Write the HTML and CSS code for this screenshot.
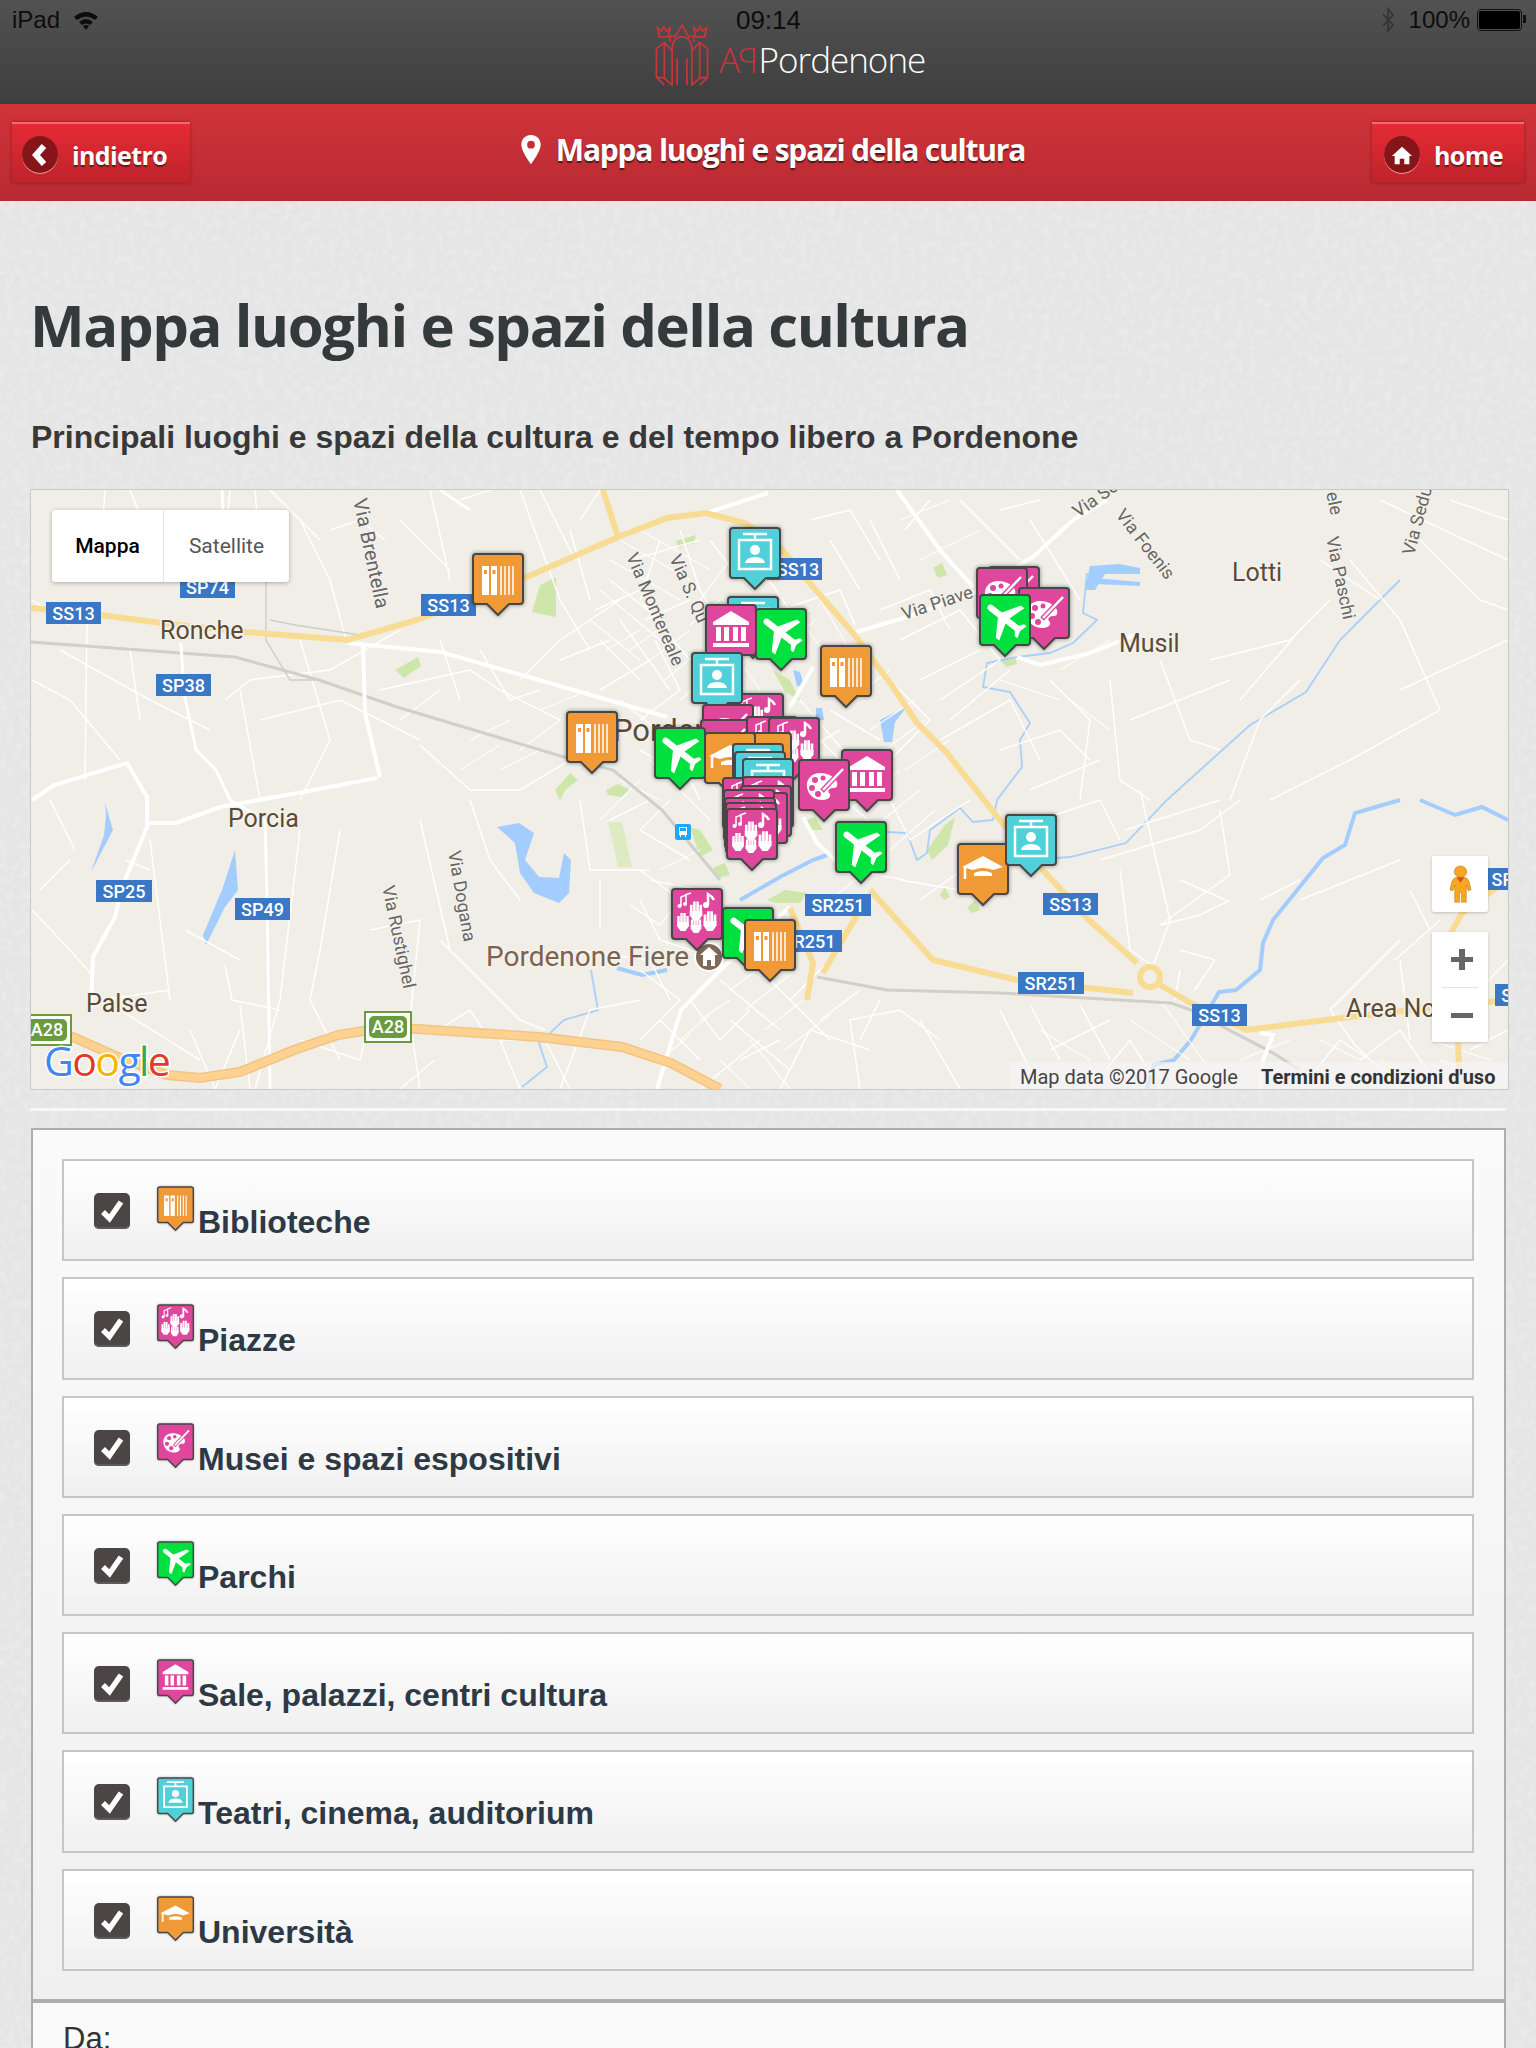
FILE: index.html
```html
<!DOCTYPE html>
<html lang="it">
<head>
    <meta charset="UTF-8">
    <meta name="viewport" content="width=device-width, initial-scale=1.0">
    <title>Mappa luoghi e spazi della cultura</title>
    <link rel="stylesheet" href="styles.css">
</head>
<body>

<!-- marker del pin, riusati in mappa e in legenda -->
<svg class="sprites" width="0" height="0" aria-hidden="true">
    <defs>
        <path id="pin-shape" d="M4 1H48Q51 1 51 4V48Q51 51 48 51H37L26 62L15 51H4Q1 51 1 48V4Q1 1 4 1Z"/>
        <g id="hand">
            <path class="ico-line" d="M-4.500 -5V2M-1.500 -8V2M1.500 -8V2M4.500 -5V2"/>
            <path class="ico-fill" d="M-6 1H6V5L2.500 10H-2.500L-6 5Z"/>
        </g>
        <symbol id="m-lib" viewBox="0 0 52 64">
            <use href="#pin-shape" class="pin-orange"/>
            <path class="ico-fill" d="M10 13H17V42H10ZM19 13H25V42H19Z"/>
            <path class="ico-thin" d="M29 13V42M33 13V42M37 13V42M41 13V42"/>
            <path class="ico-mark-orange" d="M12 17H15V21H12ZM20.500 17H23.500V21H20.500Z"/>
        </symbol>
        <symbol id="m-music" viewBox="0 0 52 64">
            <use href="#pin-shape" class="pin-pink"/>
            <path class="ico-thin" d="M10 18V9L15 7V16M14 7L20 5"/>
            <path class="ico-line" d="M37 17V6Q41 8 43 12"/>
            <circle class="ico-fill" cx="8.500" cy="18" r="2"/>
            <circle class="ico-fill" cx="14" cy="16" r="2"/>
            <circle class="ico-fill" cx="35" cy="17" r="3"/>
            <use href="#hand" transform="translate(25 22) scale(1.050)"/>
            <use href="#hand" transform="translate(12 33)"/>
            <use href="#hand" transform="translate(39 32) scale(1.100)"/>
            <use href="#hand" transform="translate(25 36) scale(.9)"/>
        </symbol>
        <symbol id="m-palette" viewBox="0 0 52 64">
            <use href="#pin-shape" class="pin-pink"/>
            <path class="ico-fill" d="M22 14C13 14 8 21 9 28C10 36 17 42 26 41C31 40 34 37 31 34C29 31 32 29 36 29C40 29 40 24 38 21C35 17 29 14 22 14Z"/>
            <circle class="ico-mark-pink" cx="17" cy="21" r="3"/>
            <circle class="ico-mark-pink" cx="14" cy="29" r="3"/>
            <circle class="ico-mark-pink" cx="20" cy="35" r="3"/>
            <circle class="ico-mark-pink" cx="25" cy="19" r="2.500"/>
            <path class="ico-edge-pink" d="M24 32L46 9"/>
            <path class="ico-line" d="M25 31L45 10"/>
        </symbol>
        <symbol id="m-park" viewBox="0 0 52 64">
            <use href="#pin-shape" class="pin-green"/>
            <path class="ico-fill" transform="translate(26 25) rotate(-52) scale(2.150) translate(-11.500 -12)" d="M21 16v-2l-8-5V3.500c0-.83-.67-1.500-1.500-1.500S10 2.670 10 3.500V9l-8 5v2l8-2.500V19l-2 1.500V22l3.500-1 3.500 1v-1.500L13 19v-5.500l8 2.500z"/>
        </symbol>
        <symbol id="m-hall" viewBox="0 0 52 64">
            <use href="#pin-shape" class="pin-pink"/>
            <path class="ico-fill" d="M26 7L44 18V21H8V18ZM8 39H44V43H8ZM11 23H16V37H11ZM19 23H24V37H19ZM28 23H33V37H28ZM36 23H41V37H36Z"/>
        </symbol>
        <symbol id="m-theatre" viewBox="0 0 52 64">
            <use href="#pin-shape" class="pin-teal"/>
            <path class="ico-line" d="M14 7H38M26 7V12M10 13H42V42H10Z"/>
            <circle class="ico-fill" cx="26" cy="23" r="5"/>
            <path class="ico-fill" d="M16 36Q17 30 26 30Q35 30 36 36Z"/>
        </symbol>
        <symbol id="m-uni" viewBox="0 0 52 64">
            <use href="#pin-shape" class="pin-orange"/>
            <path class="ico-fill" d="M26 13L46 24L36 27Q26 23 16 27L5 24ZM17 30Q26 26 35 30V33H17Z"/>
            <path class="ico-line" d="M8 24V36"/>
        </symbol>
        <filter id="paper-noise" x="0" y="0" width="100%" height="100%">
            <feTurbulence type="fractalNoise" baseFrequency="0.14" numOctaves="4" seed="4"/>
            <feColorMatrix type="matrix" values="0 0 0 0 1  0 0 0 0 1  0 0 0 0 1  0.5 0 0 0 -0.19"/>
        </filter>
    </defs>
</svg>

<svg class="paper" aria-hidden="true"><rect class="paper-rect" width="1536" height="2048"/></svg>

<header class="topbar">
    <div class="status">
        <div class="status-left">
            <span>iPad</span>
            <svg class="wifi" viewBox="0 0 26 20">
                <path d="M1 7Q13 -3 25 7L22 10Q13 3 4 10ZM6 12Q13 6 20 12L17 15Q13 12 9 15ZM10 16Q13 14 16 16L13 20Z"/>
            </svg>
        </div>
        <div class="status-time">09:14</div>
        <div class="status-right">
            <svg class="bluetooth" viewBox="0 0 14 26">
                <path d="M2 7L12 18L7 24V2L12 8L2 19"/>
            </svg>
            <span>100%</span>
            <div class="battery"><div class="battery-fill"></div></div>
        </div>
    </div>
    <div class="logo">
        <svg class="logo-icon" viewBox="0 0 56 64">
            <path d="M2 26L10 20V56L18 63V28Q18 14 28 14Q38 14 38 28V63L46 56V20L54 26V55L46 63M2 26V55L10 63M10 56L2 55M18 28L10 20M38 28L46 20M54 55L46 56"/>
            <path d="M16 19V13L21 14L24 9L28 2L32 9L35 14L40 13V19M23 36V63M33 36V63"/>
            <path d="M5 14L3 5L7 8L9.500 4L12 8L16 5L14 14Z"/>
            <path d="M42 14L40 5L44 8L46.500 4L49 8L53 5L51 14Z"/>
        </svg>
        <div class="logo-text">
            <span class="logo-a">A</span><span class="logo-p">P</span><span class="logo-name">Pordenone</span>
        </div>
    </div>
</header>

<nav class="navbar">
    <a class="nav-btn">
        <span class="nav-circle">
            <svg viewBox="0 0 20 24"><path class="nav-chevron" d="M14 3L6 12L14 21"/></svg>
        </span>
        indietro
    </a>
    <div class="nav-title">
        <svg class="nav-pin" viewBox="0 0 20 30">
            <path d="M10 0C4 0 0 4.500 0 10C0 17 10 30 10 30C10 30 20 17 20 10C20 4.500 16 0 10 0ZM10 14A4 4 0 1 1 10 6A4 4 0 0 1 10 14Z"/>
        </svg>
        Mappa luoghi e spazi della cultura
    </div>
    <a class="nav-btn nav-btn-home">
        <span class="nav-circle">
            <svg viewBox="0 0 24 24"><path class="nav-house" d="M12 3L23 13H20V22H14.500V16H9.500V22H4V13H1Z"/></svg>
        </span>
        home
    </a>
</nav>

<main class="content">
    <h1>Mappa luoghi e spazi della cultura</h1>
    <h2>Principali luoghi e spazi della cultura e del tempo libero a Pordenone</h2>

    <div class="map">
        <svg class="map-canvas" viewBox="31 490 1477 599">
            <rect class="m-land" x="31" y="490" width="1477" height="599"/>

            <!-- parchi e acqua -->
            <path class="m-park" d="M676 541L696 535L694 543L678 548ZM540 585L556 577L556 617L532 612ZM395 670L418 657L421 666L404 678ZM555 790L570 773L578 780L565 790L560 800ZM606 790L618 784L630 790L622 797L608 795ZM773 670L790 680L800 700L785 692ZM933 568L942 563L947 575L938 578ZM1000 660L1015 657L1017 664L1006 667ZM927 850L945 825L955 817L948 845L932 860ZM940 895L945 887L950 897L944 900ZM967 908L975 900L980 910L972 913ZM767 900L785 890L807 893L800 903L775 903ZM690 827L700 830L713 850L700 857ZM713 868L725 863L730 875L718 878ZM807 820L815 817L823 830L812 830Z"/>
            <path class="m-park-pale" d="M608 822H622L632 867H618Z"/>
            <path class="m-water" d="M497 827L519 823L534 833L525 860L539 877L559 878L564 853L571 860L569 893L559 903L534 893L520 873L515 843ZM105 803L113 830L91 872L104 835L106 815ZM235 850L238 890L225 907L206 945L203 935L222 890ZM884 742L880 720L892 714L906 708L895 722L892 742ZM793 670L800 672L804 686L797 686ZM816 708L822 708L824 720L816 720ZM1090 566L1120 564L1140 568V574L1105 574L1095 590L1085 590ZM1095 578L1140 582V586L1095 584ZM226 510L238 490Z"/>
            <path class="m-river" d="M1400 800L1355 813L1345 845L1323 858L1273 920L1263 943L1260 970L1236 990L1219 992L1191 1040L1174 1060L1154 1065L1147 1089"/>
            <path class="m-river" d="M1420 800L1455 815L1482 807L1508 820"/>
            <path class="m-river" d="M740 900L780 877L813 860L827 855M617 968L642 975L667 970"/>
            <path class="m-river-thin" d="M1087 573L1083 613L1097 620L1073 643L1050 653L1017 657L987 663L983 687L1010 692L1030 723L1020 740L1022 767L997 800L993 820L973 822L960 808L930 830L927 853L917 860L907 833L887 832M1055 858L1070 857L1126 843L1167 800L1250 725L1306 692L1340 640L1400 580M591 970L598 1010L564 1020L539 1043L547 1067L522 1087"/>

            <!-- strade minori -->
            <path class="m-minor" d="M105 490L100 560M130 490L150 540L210 575M230 490L225 550M255 490L262 580M32 600L70 625M87 624L85 780M32 680L70 700L120 760M60 650L150 700L210 730M130 650L140 720M225 700L250 680L330 670L400 630M240 690L260 800M260 720L340 700L420 740M300 640L330 740L300 800M380 690L470 670L500 690L560 720M400 720L440 690M420 745L470 790L520 790L570 760M440 640L460 700M480 650L510 700L540 690M520 680L560 640L620 600M560 660L610 640M600 640L640 680M600 690L650 660M620 620L670 690M640 600L690 660M570 530L590 600M520 490L560 600L590 650M430 490L450 580M400 520L450 570M330 530L360 520L385 540M300 520L330 580L346 640M270 490L290 510L320 540M460 500L520 480M540 490L575 560M600 490L580 520M630 560L700 540M660 540L640 600M680 530L700 590L730 640M595 610L640 590M610 580L660 620M645 620L690 600M655 640L680 690L640 720"/>
            <path class="m-minor" d="M32 910L70 950L92 975M120 1010L200 1060M100 1000L170 990M150 840L170 1000M185 930L240 960M300 830L280 1000L255 1089M340 830L320 950L310 1000L340 1060M370 930L420 920L410 1020L420 1089M420 820L450 950L520 1020L545 1030M440 940L500 1000M470 800L490 860L520 900M580 800L590 870L650 870M600 880L600 930M240 1005L250 1089M225 965L232 1000L280 1010M215 1089L240 1030M50 800L75 850M40 890L70 860M125 860L150 870M300 1040L360 1060L370 1020M190 1030L215 1089M430 1035L470 1010L490 1040M435 1060L400 1089M520 1089L500 1040L545 1040M545 1040L570 1089M560 1089L590 1010L640 1000M575 950L650 960L670 1000M630 905L660 925L680 900M640 870L680 900M640 970L680 1000L640 1040M660 1020L700 1060M690 1000L720 1040L750 1010M700 1089L760 1040M730 1020L790 1070M740 1060L780 1040M780 1089L810 1030L870 1050M860 1089L850 1020L900 1010L940 1040M920 1020L960 1089M1000 1010L1040 1089M1080 1005L1110 1060M1050 1050L1110 1020"/>
            <path class="m-minor" d="M780 610L840 590L855 625M810 520L850 510L880 560M830 540L860 590M870 520L900 580M880 610L930 590L950 630M930 500L905 530M960 500L1020 560M1000 510L1040 500M1030 520L1080 600M900 640L960 610L1000 660L940 700M920 680L980 650M950 720L1010 670M870 660L930 720L890 760M940 740L1010 700L1040 760M1000 750L1060 730L1090 760M1050 680L1090 720L1080 800M1110 680L1120 780L1150 800M1160 660L1190 740L1220 750M1130 720L1230 680M1210 660L1290 640L1330 600M1240 700L1300 630M1300 680L1260 720L1230 800M1350 560L1400 620L1440 710L1350 760L1270 800M1420 540L1480 600L1508 610M1320 560L1380 600M1400 690L1508 640M1380 500L1508 560M1450 500L1508 520M880 780L910 840L970 800M920 900L990 850M990 870L1010 830L1100 800L1120 840M1030 790L1100 760M1100 860L1200 830L1240 800M1120 870L1130 950L1160 970M1125 830L1220 800M1140 790L1170 920L1150 975M1180 880L1226 900M1220 810L1230 875L1160 925M1160 925L1200 915L1230 900M1180 950L1215 960M1215 960L1195 990M1180 970L1175 1000M1260 900L1300 880M1300 900L1400 860M1410 890L1430 930M1400 940L1350 990L1330 1010L1355 1045L1400 1089M1395 960L1440 920M1400 960L1410 1040M1450 950L1450 1020M1030 1005L1060 1060M1360 1060L1400 1030L1440 1089M1300 1089L1340 1040L1400 1080M1090 1089L1130 1040L1160 1089M1470 1000L1508 960M1470 1050L1508 1030"/>
            <path class="m-minor" d="M620 700L670 740M640 750L690 780M680 760L700 800M820 740L870 790M830 710L880 740M800 700L860 770M790 760L840 730M740 540L790 610L760 650M710 540L740 580M770 640L810 610M820 780L880 830M880 860L830 900M850 870L905 880M640 830L690 860M610 820L650 800M650 880L700 890M640 900L660 940L720 960M720 980L780 1030M760 970L830 1040M790 1000L830 960M820 1020L860 990M880 1000L860 1040M900 880L960 890L1000 880"/>
            <!-- fitto attorno al centro -->
            <path class="m-minor-thin" d="M610 560L680 600M620 540L690 580M640 530L710 570M600 590L660 640M590 620L640 660M606 650L640 630M630 650L665 625M650 660L690 630M665 680L700 650M680 700L715 670M700 600L730 560M710 620L760 600M690 625L720 600M725 640L760 690M800 620L830 660M820 600L850 650M795 640L815 620M830 680L870 650M850 700L890 670M870 730L915 700M885 750L925 720M905 770L950 740M850 810L900 770M870 830L920 790M890 850L935 810M650 760L710 820M620 780L660 800M600 820L640 780M640 830L670 800M660 870L700 850M540 710L590 690M520 750L560 720M500 770L540 750M470 740L510 720M460 770L500 745M730 990L770 960M745 1010L790 975M765 1030L810 995M785 1050L830 1015M700 1020L730 1000M680 1040L710 1015M660 1060L690 1035M720 1060L750 1089M750 1040L790 1089M900 520L950 500M920 560L980 530M960 600L1030 570M1040 610L1070 590M1060 670L1110 640M1000 680L1060 700M1070 700L1110 730M1040 1030L1090 1060M1160 1000L1210 1070M1130 1020L1190 1060M1240 1060L1290 1040M1320 1040L1360 1060M1380 1060L1420 1089M1430 1040L1490 1060M1440 1060L1500 1080"/>

            <!-- ferrovia -->
            <path class="m-rail" d="M31 642L235 657L319 680L397 707L564 757L613 770L662 810L720 880M817 977L887 990L1000 993L1171 1003L1191 1010L1273 1053L1300 1070"/>
            <path class="m-rail-thin" d="M266 582V640L290 680L319 680M270 620L295 625L360 635"/>

            <!-- strade principali -->
            <path class="m-white" d="M348 643L441 652L539 680L667 717M363 643L365 713L380 777M147 823L176 823L220 807L314 790L377 778M907 617L973 593L1033 557L1073 520L1107 500M706 513L768 493M853 633L907 617M897 490L940 550L973 587M657 1089L681 1010L720 970L790 907M803 817L817 843L860 883M790 707L813 667M1017 657L1040 665L1090 653L1140 633M1260 1033L1273 1035L1263 1060L1260 1089M32 800L54 785L127 763L147 797L147 827L122 887L115 917L93 957L91 1007"/>
            <path class="m-white-thin" d="M181 643L184 693L196 750L216 770L230 800L265 820L267 900L270 1089M222 490L225 560M440 490L470 510"/>

            <!-- statali e autostrada -->
            <path class="m-major" d="M31 608L100 615L162 623L245 632L348 640L417 620L520 580L618 537L667 518L706 513L745 523L780 547L807 580L853 633L893 687L917 723L947 753L1000 820L1040 867L1089 920L1137 963M1160 985L1191 1003L1246 1030L1342 1018L1438 1007L1508 1000M1451 933L1462 913L1489 893L1508 880M1458 1043L1460 1089M618 537L603 490M790 908L813 963L807 1000M860 910L823 973M870 890L933 960L1017 980L1133 993"/>
            <circle class="m-roundabout" cx="1150" cy="977" r="10"/>
            <path class="m-highway-edge" d="M32 1030L73 1037L118 1057L167 1075L200 1078L240 1072L294 1050L338 1035L387 1027L539 1037L622 1047L671 1063L720 1089"/>
            <path class="m-highway" d="M32 1030L73 1037L118 1057L167 1075L200 1078L240 1072L294 1050L338 1035L387 1027L539 1037L622 1047L671 1063L720 1089"/>

            <!-- etichette -->
            <g class="m-road-names">
                <text class="m-name-big" transform="translate(353 500) rotate(78)">Via Brentella</text>
                <text transform="translate(626 556) rotate(67)">Via Montereale</text>
                <text transform="translate(669 558) rotate(66)">Via S. Qu</text>
                <text transform="translate(904 620) rotate(-18)">Via Piave</text>
                <text transform="translate(448 852) rotate(80)">Via Dogana</text>
                <text transform="translate(382 887) rotate(78)">Via Rustighel</text>
                <text transform="translate(1115 515) rotate(52)">Via Foenis</text>
                <text transform="translate(1078 518) rotate(-35)">Via Se</text>
                <text transform="translate(1326 538) rotate(78)">Via Paschi</text>
                <text transform="translate(1414 556) rotate(-75)">Via Sedu</text>
                <text transform="translate(1326 493) rotate(78)">ele</text>
            </g>
            <g class="m-places">
                <text x="160" y="639">Ronche</text>
                <text x="228" y="827">Porcia</text>
                <text x="86" y="1012">Palse</text>
                <text x="1232" y="581">Lotti</text>
                <text x="1119" y="652">Musil</text>
                <text x="1346" y="1017">Area Nord</text>
                <text class="m-city" x="613" y="741">Pordenone</text>
                <text class="m-poi" x="486" y="966">Pordenone Fiere</text>
            </g>

            <circle class="m-poi-circle" cx="709" cy="957" r="14"/>
            <path class="m-poi-house" d="M709 947L718 955H715V966H711V960H707V966H703V955H700Z"/>

            <rect class="m-bus" x="675" y="824" width="16" height="16" rx="2"/>
            <path class="m-bus-ico" d="M679 827H687V835H686V837H685V835H681V837H680V835H679ZM680 828V831H686V828Z"/>

            <!-- targhe -->
            <g class="m-shields">
                <rect x="46" y="602" width="55" height="22"/><text x="73.500" y="620">SS13</text>
                <rect x="180" y="576" width="55" height="22"/><text x="207.500" y="594">SP74</text>
                <rect x="421" y="594" width="55" height="22"/><text x="448.500" y="612">SS13</text>
                <rect x="156" y="674" width="55" height="22"/><text x="183.500" y="692">SP38</text>
                <rect x="767" y="558" width="55" height="22"/><text x="798" y="576">SS13</text>
                <rect x="805" y="894" width="66" height="22"/><text x="838" y="912">SR251</text>
                <rect x="776" y="930" width="66" height="22"/><text x="809" y="948">SR251</text>
                <rect x="1043" y="893" width="55" height="22"/><text x="1070.500" y="911">SS13</text>
                <rect x="1018" y="972" width="66" height="22"/><text x="1051" y="990">SR251</text>
                <rect x="1192" y="1004" width="55" height="22"/><text x="1219.500" y="1022">SS13</text>
                <rect x="1485" y="868" width="66" height="22"/><text x="1518" y="886">SR251</text>
                <rect x="1495" y="984" width="55" height="22"/><text x="1522.500" y="1002">SS13</text>
                <rect x="96" y="880" width="56" height="22"/><text x="124" y="898">SP25</text>
                <rect x="235" y="898" width="55" height="22"/><text x="262.500" y="916">SP49</text>
            </g>
            <g class="m-motorway">
                <rect class="m-motorway-frame" x="365" y="1012" width="46" height="30"/>
                <rect x="369" y="1016" width="38" height="22" rx="5"/><text x="388" y="1033">A28</text>
                <rect class="m-motorway-frame" x="13" y="1015" width="58" height="30"/>
                <rect x="17" y="1019" width="50" height="22" rx="5"/><text x="47" y="1036">A28</text>
            </g>

            <!-- marker -->
            <g class="m-markers">
                <use href="#m-lib" x="472" y="553" width="52" height="64"/>
                <use href="#m-lib" x="566" y="711" width="52" height="64"/>
                <use href="#m-theatre" x="727" y="596" width="52" height="64"/>
                <use href="#m-theatre" x="729" y="527" width="52" height="64"/>
                <use href="#m-hall" x="705" y="604" width="52" height="64"/>
                <use href="#m-park" x="755" y="608" width="52" height="64"/>
                <use href="#m-music" x="732" y="693" width="52" height="64"/>
                <use href="#m-theatre" x="691" y="652" width="52" height="64"/>
                <use href="#m-lib" x="820" y="645" width="52" height="64"/>
                <use href="#m-palette" x="702" y="704" width="52" height="64"/>
                <use href="#m-palette" x="700" y="719" width="52" height="64"/>
                <use href="#m-music" x="746" y="716" width="52" height="64"/>
                <use href="#m-music" x="768" y="717" width="52" height="64"/>
                <use href="#m-uni" x="740" y="732" width="52" height="64"/>
                <use href="#m-uni" x="704" y="732" width="52" height="64"/>
                <use href="#m-park" x="654" y="727" width="52" height="64"/>
                <use href="#m-theatre" x="732" y="743" width="52" height="64"/>
                <use href="#m-theatre" x="734" y="751" width="52" height="64"/>
                <use href="#m-theatre" x="742" y="758" width="52" height="64"/>
                <use href="#m-hall" x="841" y="749" width="52" height="64"/>
                <use href="#m-music" x="722" y="777" width="52" height="64"/>
                <use href="#m-music" x="742" y="776" width="52" height="64"/>
                <use href="#m-music" x="740" y="785" width="52" height="64"/>
                <use href="#m-music" x="736" y="792" width="52" height="64"/>
                <use href="#m-music" x="723" y="789" width="52" height="64"/>
                <use href="#m-music" x="724" y="797" width="52" height="64"/>
                <use href="#m-music" x="725" y="802" width="52" height="64"/>
                <use href="#m-music" x="726" y="808" width="52" height="64"/>
                <use href="#m-palette" x="798" y="759" width="52" height="64"/>
                <use href="#m-park" x="835" y="821" width="52" height="64"/>
                <use href="#m-uni" x="957" y="843" width="52" height="64"/>
                <use href="#m-theatre" x="1005" y="814" width="52" height="64"/>
                <use href="#m-music" x="671" y="888" width="52" height="64"/>
                <use href="#m-park" x="722" y="907" width="52" height="64"/>
                <use href="#m-lib" x="744" y="919" width="52" height="64"/>
                <use href="#m-palette" x="988" y="566" width="52" height="64"/>
                <use href="#m-palette" x="976" y="567" width="52" height="64"/>
                <use href="#m-palette" x="1018" y="587" width="52" height="64"/>
                <use href="#m-park" x="979" y="594" width="52" height="64"/>
            </g>

            <g class="m-attribution">
                <rect x="1010" y="1062" width="498" height="27"/>
                <text x="1020" y="1084">Map data ©2017 Google</text>
                <text class="m-terms" x="1261" y="1084">Termini e condizioni d'uso</text>
            </g>

            <text class="m-google" x="44" y="1076"><tspan class="g-blue">G</tspan><tspan class="g-red">o</tspan><tspan class="g-yellow">o</tspan><tspan class="g-blue">g</tspan><tspan class="g-green">l</tspan><tspan class="g-red">e</tspan></text>
        </svg>

        <div class="map-type">
            <div class="map-type-btn map-type-active">Mappa</div>
            <div class="map-type-btn">Satellite</div>
        </div>

        <div class="pegman">
            <svg viewBox="0 0 24 44" preserveAspectRatio="none">
                <path class="peg-body" d="M12 1A6 6 0 0 1 12 14A6 6 0 0 1 12 1ZM7 14H17Q20 15 21 19L23 28L20 29L18 23V42H13V31H11V42H6V23L4 29L1 28L3 19Q4 15 7 14Z"/>
                <path class="peg-scarf" d="M8 14L12 20L16 14Z"/>
            </svg>
        </div>

        <div class="zoom-ctrl">
            <div class="zoom-sign zoom-plus"></div>
            <div class="zoom-sep"></div>
            <div class="zoom-sign"></div>
        </div>
    </div>

    <hr class="divider">

    <section class="panel">
        <div class="filters">
            <label class="filter">
                <span class="check"><svg viewBox="0 0 36 36"><path d="M9 19L15.500 25.500L27 9"/></svg></span>
                <svg class="pin"><use href="#m-lib"/></svg>
                <span class="filter-name">Biblioteche</span>
            </label>
            <label class="filter">
                <span class="check"><svg viewBox="0 0 36 36"><path d="M9 19L15.500 25.500L27 9"/></svg></span>
                <svg class="pin"><use href="#m-music"/></svg>
                <span class="filter-name">Piazze</span>
            </label>
            <label class="filter">
                <span class="check"><svg viewBox="0 0 36 36"><path d="M9 19L15.500 25.500L27 9"/></svg></span>
                <svg class="pin"><use href="#m-palette"/></svg>
                <span class="filter-name">Musei e spazi espositivi</span>
            </label>
            <label class="filter">
                <span class="check"><svg viewBox="0 0 36 36"><path d="M9 19L15.500 25.500L27 9"/></svg></span>
                <svg class="pin"><use href="#m-park"/></svg>
                <span class="filter-name">Parchi</span>
            </label>
            <label class="filter">
                <span class="check"><svg viewBox="0 0 36 36"><path d="M9 19L15.500 25.500L27 9"/></svg></span>
                <svg class="pin"><use href="#m-hall"/></svg>
                <span class="filter-name">Sale, palazzi, centri cultura</span>
            </label>
            <label class="filter">
                <span class="check"><svg viewBox="0 0 36 36"><path d="M9 19L15.500 25.500L27 9"/></svg></span>
                <svg class="pin"><use href="#m-theatre"/></svg>
                <span class="filter-name">Teatri, cinema, auditorium</span>
            </label>
            <label class="filter">
                <span class="check"><svg viewBox="0 0 36 36"><path d="M9 19L15.500 25.500L27 9"/></svg></span>
                <svg class="pin"><use href="#m-uni"/></svg>
                <span class="filter-name">Università</span>
            </label>
        </div>
        <div class="route">Da:</div>
    </section>
</main>

</body>
</html>
```

FILE: styles.css
```css
html, body {
    margin: 0;
    padding: 0;
    height: 2048px;
    overflow: hidden;
}

body {
    position: relative;
    background-color: #e5e5e5;
    font-family: "Liberation Sans", Arial, sans-serif;
}

.sprites {
    position: absolute;
}

/* grana leggera dello sfondo */
.paper {
    position: absolute;
    left: 0;
    top: 0;
    width: 1536px;
    height: 2048px;
}

.paper-rect {
    filter: url(#paper-noise);
}

/* barra superiore */
.topbar {
    position: relative;
    height: 104px;
    background: linear-gradient(#525252, #3e3e3e);
}

.status {
    display: flex;
    justify-content: space-between;
    align-items: center;
    height: 40px;
    padding: 0 11px 0 12px;
    font-size: 24px;
    color: #0d0d0d;
}

.status-left,
.status-right {
    display: flex;
    align-items: center;
    width: 300px;
}

.status-right {
    justify-content: flex-end;
}

.status-time {
    font-size: 26px;
}

.wifi {
    width: 26px;
    height: 20px;
    margin-left: 13px;
    fill: #0d0d0d;
}

.bluetooth {
    width: 14px;
    height: 26px;
    margin-right: 14px;
    fill: none;
    stroke: #333;
    stroke-width: 1.6;
}

.battery {
    position: relative;
    width: 41px;
    height: 18px;
    margin-left: 7px;
    margin-right: 3px;
    padding: 1px;
    border: 1px solid #111;
    border-radius: 4px;
}

.battery-fill {
    height: 100%;
    background-color: #000;
    border-radius: 2px;
}

.battery::after {
    content: "";
    position: absolute;
    right: -5px;
    top: 5px;
    width: 3px;
    height: 8px;
    background-color: #111;
}

.logo {
    position: absolute;
    left: 654px;
    top: 23px;
    display: flex;
    align-items: flex-start;
}

.logo-text {
    margin-top: 11px;
    font-family: "Open Sans", sans-serif;
    font-weight: 300;
    font-size: 35px;
    line-height: 52px;
    letter-spacing: -1px;
}

.logo-icon {
    width: 56px;
    height: 63px;
    margin-right: 9px;
    fill: none;
    stroke: #c8343c;
    stroke-width: 1.8;
}

.logo-a,
.logo-p {
    color: #c8343c;
}

.logo-p {
    display: inline-block;
    transform: scaleX(-1);
}

.logo-name {
    color: #fff;
}

/* barra rossa */
.navbar {
    position: relative;
    display: flex;
    justify-content: space-between;
    align-items: center;
    box-sizing: border-box;
    height: 97px;
    padding: 18px 12px 18px 12px;
    background: linear-gradient(#d13339, #b82a33);
}

.nav-btn {
    display: flex;
    align-items: center;
    box-sizing: border-box;
    width: 178px;
    height: 61px;
    padding: 2px 0 0 10px;
    border-top: 2px solid #f4686b;
    background: linear-gradient(#e52b34, #bf232c);
    box-shadow: 0 0 3px rgba(90, 0, 0, 0.5);
    color: #fff;
    font-family: "Open Sans", sans-serif;
    font-size: 25px;
    font-weight: 700;
    letter-spacing: -0.6px;
    text-shadow: 0 2px 1px rgba(60, 20, 20, 0.7);
}

.nav-btn-home {
    width: 152px;
    padding-left: 12px;
}

.nav-circle {
    display: flex;
    justify-content: center;
    align-items: center;
    width: 36px;
    height: 37px;
    margin-right: 14px;
    border-radius: 50%;
    background-color: #861519;
    box-shadow: 0 1px 0 #ec9a9c;
}

.nav-circle svg {
    width: 22px;
    height: 24px;
}

.nav-chevron {
    fill: none;
    stroke: #fff;
    stroke-width: 6;
}

.nav-house {
    fill: #fff;
}

.nav-title {
    display: flex;
    align-items: center;
    margin-right: 16px;
    margin-bottom: 6px;
    color: #fff;
    font-family: "Open Sans", sans-serif;
    font-size: 30px;
    font-weight: 700;
    letter-spacing: -1.2px;
    text-shadow: 0 2px 1px rgba(50, 20, 20, 0.8);
}

.nav-pin {
    width: 20px;
    height: 29px;
    margin-right: 15px;
    fill: #fff;
}

/* contenuto */
.content {
    position: relative;
    padding: 0 30px 0 30px;
}

h1 {
    margin: 0;
    padding-top: 89px;
    color: #34393b;
    font-family: "Open Sans", sans-serif;
    font-size: 58px;
    font-weight: 700;
    line-height: 70px;
    letter-spacing: -1.4px;
}

h2 {
    margin: 58px 0 0 1px;
    color: #383838;
    font-size: 32px;
    font-weight: 700;
    line-height: 38px;
}

/* mappa */
.map {
    position: relative;
    width: 1477px;
    height: 599px;
    margin-top: 33px;
    border: 1px solid #c8c8c8;
    overflow: hidden;
}

.map-canvas {
    display: block;
    width: 1477px;
    height: 599px;
}

.m-land { fill: #f0eee6; }
.m-park { fill: #cfe6ab; }
.m-park-pale { fill: #dcebc2; }
.m-water { fill: #a3ccff; }
.m-river { fill: none; stroke: #a3ccff; stroke-width: 4; }
.m-river-thin { fill: none; stroke: #a9cffb; stroke-width: 1.8; }
.m-minor { fill: none; stroke: #fff; stroke-width: 1.5; opacity: 0.95; }
.m-minor-thin { fill: none; stroke: #fff; stroke-width: 1.2; opacity: 0.9; }
.m-rail { fill: none; stroke: #cfcfcb; stroke-width: 3; }
.m-rail-thin { fill: none; stroke: #cdcdc9; stroke-width: 1.4; }
.m-white { fill: none; stroke: #fff; stroke-width: 4; }
.m-white-thin { fill: none; stroke: #fff; stroke-width: 3; }
.m-major { fill: none; stroke: #f9dc93; stroke-width: 6; }
.m-roundabout { fill: #f0eee6; stroke: #f9dc93; stroke-width: 6; }
.m-highway-edge { fill: none; stroke: #f2c484; stroke-width: 10; }
.m-highway { fill: none; stroke: #fdd291; stroke-width: 7; }

.m-road-names text {
    fill: #666;
    font-family: Roboto, sans-serif;
    font-size: 18px;
    stroke: #f4f2ec;
    stroke-width: 2px;
    paint-order: stroke;
}

.m-road-names .m-name-big {
    font-size: 20px;
}

.m-places text {
    fill: #5b4b36;
    font-family: Roboto, sans-serif;
    font-size: 25px;
    stroke: #f4f2ec;
    stroke-width: 3px;
    paint-order: stroke;
}

.m-places .m-city {
    font-size: 31px;
}

.m-places .m-poi {
    fill: #7c6350;
    font-size: 28px;
}

.m-poi-circle { fill: #7f6a5a; stroke: #fff; stroke-width: 2; }
.m-poi-house { fill: #fff; }
.m-bus { fill: #1ea8fc; }
.m-bus-ico { fill: #fff; }

.m-shields rect { fill: #3a77c6; }

.m-shields text,
.m-motorway text {
    fill: #fff;
    font-family: Roboto, sans-serif;
    font-size: 18px;
    font-weight: 500;
    text-anchor: middle;
}

.m-motorway rect { fill: #6a9c3f; }
.m-motorway .m-motorway-frame { fill: #fff; stroke: #6a9c3f; stroke-width: 2; }

.m-markers {
    filter: drop-shadow(0 0 2px rgba(0, 0, 0, 0.45));
}

.m-attribution rect { fill: rgba(245, 245, 245, 0.7); }

.m-attribution text {
    fill: #444;
    font-family: Roboto, sans-serif;
    font-size: 20px;
}

.m-attribution .m-terms {
    fill: #333;
    font-weight: 700;
}

.m-google {
    font-family: "Open Sans", sans-serif;
    font-size: 41px;
    font-weight: 400;
    letter-spacing: -1.6px;
    stroke: #fff;
    stroke-width: 3px;
    paint-order: stroke;
}

.g-blue { fill: #4285f4; }
.g-red { fill: #e33a2c; }
.g-yellow { fill: #f4b400; }
.g-green { fill: #34a853; }

/* colori dei pin */
.pin-orange,
.pin-pink,
.pin-green,
.pin-teal {
    stroke: #474747;
    stroke-width: 2;
}

.pin-orange { fill: #f09a37; }
.pin-pink { fill: #df479c; }
.pin-green { fill: #00e03f; }
.pin-teal { fill: #50d0d8; }

.ico-fill { fill: #fff; }
.ico-line { fill: none; stroke: #fff; stroke-width: 2.500; }
.ico-thin { fill: none; stroke: #fff; stroke-width: 1.500; }
.ico-mark-orange { fill: #f09a37; }
.ico-mark-pink { fill: #df479c; }
.ico-edge-pink { fill: none; stroke: #df479c; stroke-width: 5; }

/* controlli mappa */
.map-type {
    position: absolute;
    left: 21px;
    top: 20px;
    display: flex;
    height: 72px;
    border-radius: 3px;
    background-color: #fff;
    box-shadow: 0 1px 4px rgba(0, 0, 0, 0.3);
    font-family: Roboto, sans-serif;
    font-size: 21px;
}

.map-type-btn {
    display: flex;
    justify-content: center;
    align-items: center;
    width: 125px;
    color: #565656;
}

.map-type-active {
    width: 111px;
    border-right: 1px solid #e6e6e6;
    color: #000;
    font-weight: 500;
}

.pegman {
    position: absolute;
    left: 1401px;
    top: 366px;
    display: flex;
    justify-content: center;
    align-items: center;
    width: 56px;
    height: 56px;
    border-radius: 2px;
    background-color: #fff;
    box-shadow: 0 1px 3px rgba(0, 0, 0, 0.2);
}

.pegman svg {
    width: 23px;
    height: 39px;
}

.peg-body { fill: #f5a623; stroke: #b97a10; stroke-width: 0.6; }
.peg-scarf { fill: #d8501a; }

.zoom-ctrl {
    position: absolute;
    left: 1401px;
    top: 442px;
    display: flex;
    flex-direction: column;
    align-items: center;
    width: 56px;
    height: 110px;
    border-radius: 2px;
    background-color: #fff;
    box-shadow: 0 1px 3px rgba(0, 0, 0, 0.2);
}

.zoom-sep {
    width: 36px;
    height: 1px;
    background-color: #e2e2e2;
}

.zoom-sign {
    position: relative;
    flex: 1;
    width: 100%;
}

.zoom-sign::before {
    content: "";
    position: absolute;
    left: 19px;
    top: 25px;
    width: 22px;
    height: 5px;
    background-color: #666;
}

.zoom-plus::after {
    content: "";
    position: absolute;
    left: 27px;
    top: 17px;
    width: 6px;
    height: 21px;
    background-color: #666;
}

.divider {
    height: 3px;
    box-sizing: border-box;
    width: 1476px;
    margin: 18px 0 17px 0;
    border: 0;
    background-color: #f7f7f7;
}

/* pannello filtri */
.panel {
    box-sizing: border-box;
    width: 1475px;
    margin-left: 1px;
    border: 2px solid #adadad;
    background: linear-gradient(#fafafa, #efefef);
}

.filters {
    display: flex;
    flex-direction: column;
    gap: 16px;
    padding: 29px 30px 28px 29px;
}

.filter {
    display: flex;
    align-items: flex-start;
    box-sizing: border-box;
    height: 102.300px;
    padding-left: 30px;
    border: 2px solid #c6c6c6;
    background: linear-gradient(#fff, #f0f0f0);
}

.check {
    width: 36px;
    height: 36px;
    margin-top: 32px;
    margin-right: 27px;
    border-radius: 5px;
    background-color: #4b4545;
    box-shadow: inset 0 -2px 0 #5f5a5a;
}

.check svg {
    display: block;
    width: 36px;
    height: 36px;
    fill: none;
    stroke: #fff;
    stroke-width: 5.5;
}

.pin {
    width: 37px;
    height: 46px;
    margin-top: 25px;
    filter: drop-shadow(0 0 1px rgba(0, 0, 0, 0.3));
}

.filter-name {
    margin-top: 40px;
    margin-left: 4px;
    color: #2d3a45;
    font-size: 32px;
    font-weight: 700;
    line-height: 42px;
}

.route {
    padding: 18px 30px;
    border-top: 4px solid #adadad;
    background-color: #fafafa;
    color: #333;
    font-size: 31px;
    line-height: 36px;
}
```
